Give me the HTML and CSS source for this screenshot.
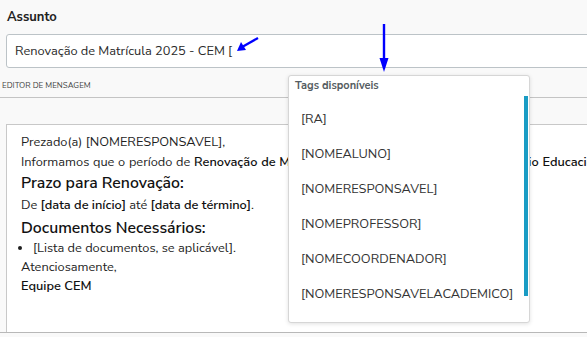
FILE: index.html
```html
<!DOCTYPE html>
<html lang="pt-BR">
<head>
<meta charset="utf-8">
<link rel="stylesheet" href="styles.css">
</head>
<body>
<div class="page">
  <div class="field">
    <label class="field-label">Assunto</label>
    <div class="input">Renovação de Matrícula 2025 - CEM [</div>
  </div>
  <div class="editor-head">Editor de mensagem</div>
  <div class="editor-wrap">
    <div class="editor">
      <p>Prezado(a) [NOMERESPONSAVEL],</p>
      <p class="nowrap">Informamos que o período de <b>Renovação de Matrícula 2025</b> já está aberto para o <b>Colégio Educacional CEM</b>.</p>
      <h3>Prazo para Renovação:</h3>
      <p class="after-h">De <b>[data de início]</b> até <b>[data de término]</b>.</p>
      <h3 class="h-second">Documentos Necessários:</h3>
      <ul><li>[Lista de documentos, se aplicável].</li></ul>
      <p class="tight">Atenciosamente,</p>
      <p class="tight"><b>Equipe CEM</b></p>
    </div>
  </div>

  <div class="tags">
    <div class="tags-title">Tags disponíveis</div>
    <ul class="tags-list">
      <li>[RA]</li>
      <li>[NOMEALUNO]</li>
      <li>[NOMERESPONSAVEL]</li>
      <li>[NOMEPROFESSOR]</li>
      <li>[NOMECOORDENADOR]</li>
      <li>[NOMERESPONSAVELACADEMICO]</li>
    </ul>
    <div class="scroll-thumb"></div>
  </div>

  <svg class="arrow arrow-diag" width="30" height="20" viewBox="0 0 30 20">
    <line x1="23" y1="3" x2="8" y2="11.5" stroke="#0000ff" stroke-width="2.2"/>
    <polygon points="2,16 6,7 11,15" fill="#0000ff"/>
  </svg>
  <svg class="arrow arrow-down" width="12" height="50" viewBox="0 0 12 50">
    <line x1="6" y1="0" x2="6" y2="36" stroke="#0000ff" stroke-width="2.4"/>
    <polygon points="1.5,34 10.5,34 6,48" fill="#0000ff"/>
  </svg>
</div>
</body>
</html>
```
FILE: styles.css
```css
html, body {
  margin: 0;
  padding: 0;
  background: #f9f9f9;
  overflow: hidden;
}
body {
  font-family: "Nunito Sans", "Open Sans", "Noto Sans", sans-serif;
  color: #2a2a2a;
  width: 587px;
  height: 337px;
}
.page {
  position: relative;
  height: 337px;
}
.field {
  padding: 8px 0 0 6px;
}
.field-label {
  display: block;
  font-weight: 700;
  font-size: 13px;
  line-height: 18px;
  margin-left: 1px;
  color: #222;
}
.input {
  margin-top: 8px;
  height: 32px;
  width: 620px;
  box-sizing: content-box;
  border: 1px solid #bcc3c7;
  border-radius: 3px;
  background: #fff;
  font-size: 12.8px;
  line-height: 32px;
  padding-left: 8px;
  color: #2a2a2a;
}
.editor-head {
  margin-top: 12px;
  padding-left: 2px;
  font-size: 8px;
  line-height: 12px;
  text-transform: uppercase;
  color: #444;
  height: 17px;
  border-bottom: 1px solid #c4c4c4;
}
.editor-wrap {
  padding: 26px 0 0 6px;
}
.editor {
  height: 200px;
  width: 620px;
  border: 1px solid #c8c8c8;
  border-bottom: none;
  background: #fff;
  padding: 7px 14px 0;
  font-size: 12.8px;
  line-height: 20px;
  color: #1f1f1f;
}
.editor p { margin: 0; }
.editor b { font-weight: 600; color: #111; }
.editor .nowrap { white-space: nowrap; word-spacing: 0.4px; }
.editor h3 {
  margin: 0;
  font-size: 15.8px;
  line-height: 22px;
  font-weight: 600;
  color: #111;
}
.editor .after-h { margin-top: 1px; }
.editor .h-second { margin-top: 2px; }
.editor ul {
  margin: -1px 0 0;
  padding-left: 12px;
}
.editor .tight { line-height: 19px; }
.editor-wrap::after {
  content: "";
  display: block;
  margin-left: -6px;
  border-top: 1px solid #b8b8b8;
}
.tags {
  position: absolute;
  left: 288px;
  top: 75px;
  width: 242px;
  height: 248px;
  box-sizing: border-box;
  background: #fff;
  border: 1px solid #d6d6d6;
  border-radius: 3px;
  box-shadow: 0 1px 4px rgba(0,0,0,0.12);
  overflow: hidden;
}
.tags-title {
  padding: 2px 0 0 6px;
  font-size: 11px;
  line-height: 15px;
  font-weight: 700;
  color: #555d62;
}
.tags-list {
  list-style: none;
  margin: 0;
  padding: 9px 0 0 12px;
  font-size: 12.8px;
  line-height: 35px;
  color: #333;
}
.tags-list li { height: 35px; }
.scroll-thumb {
  position: absolute;
  right: 1px;
  top: 20px;
  width: 4px;
  height: 200px;
  background: #1a9cc4;
}
.arrow { position: absolute; }
.arrow-diag { left: 235px; top: 35px; }
.arrow-down { left: 378px; top: 24px; }
```
